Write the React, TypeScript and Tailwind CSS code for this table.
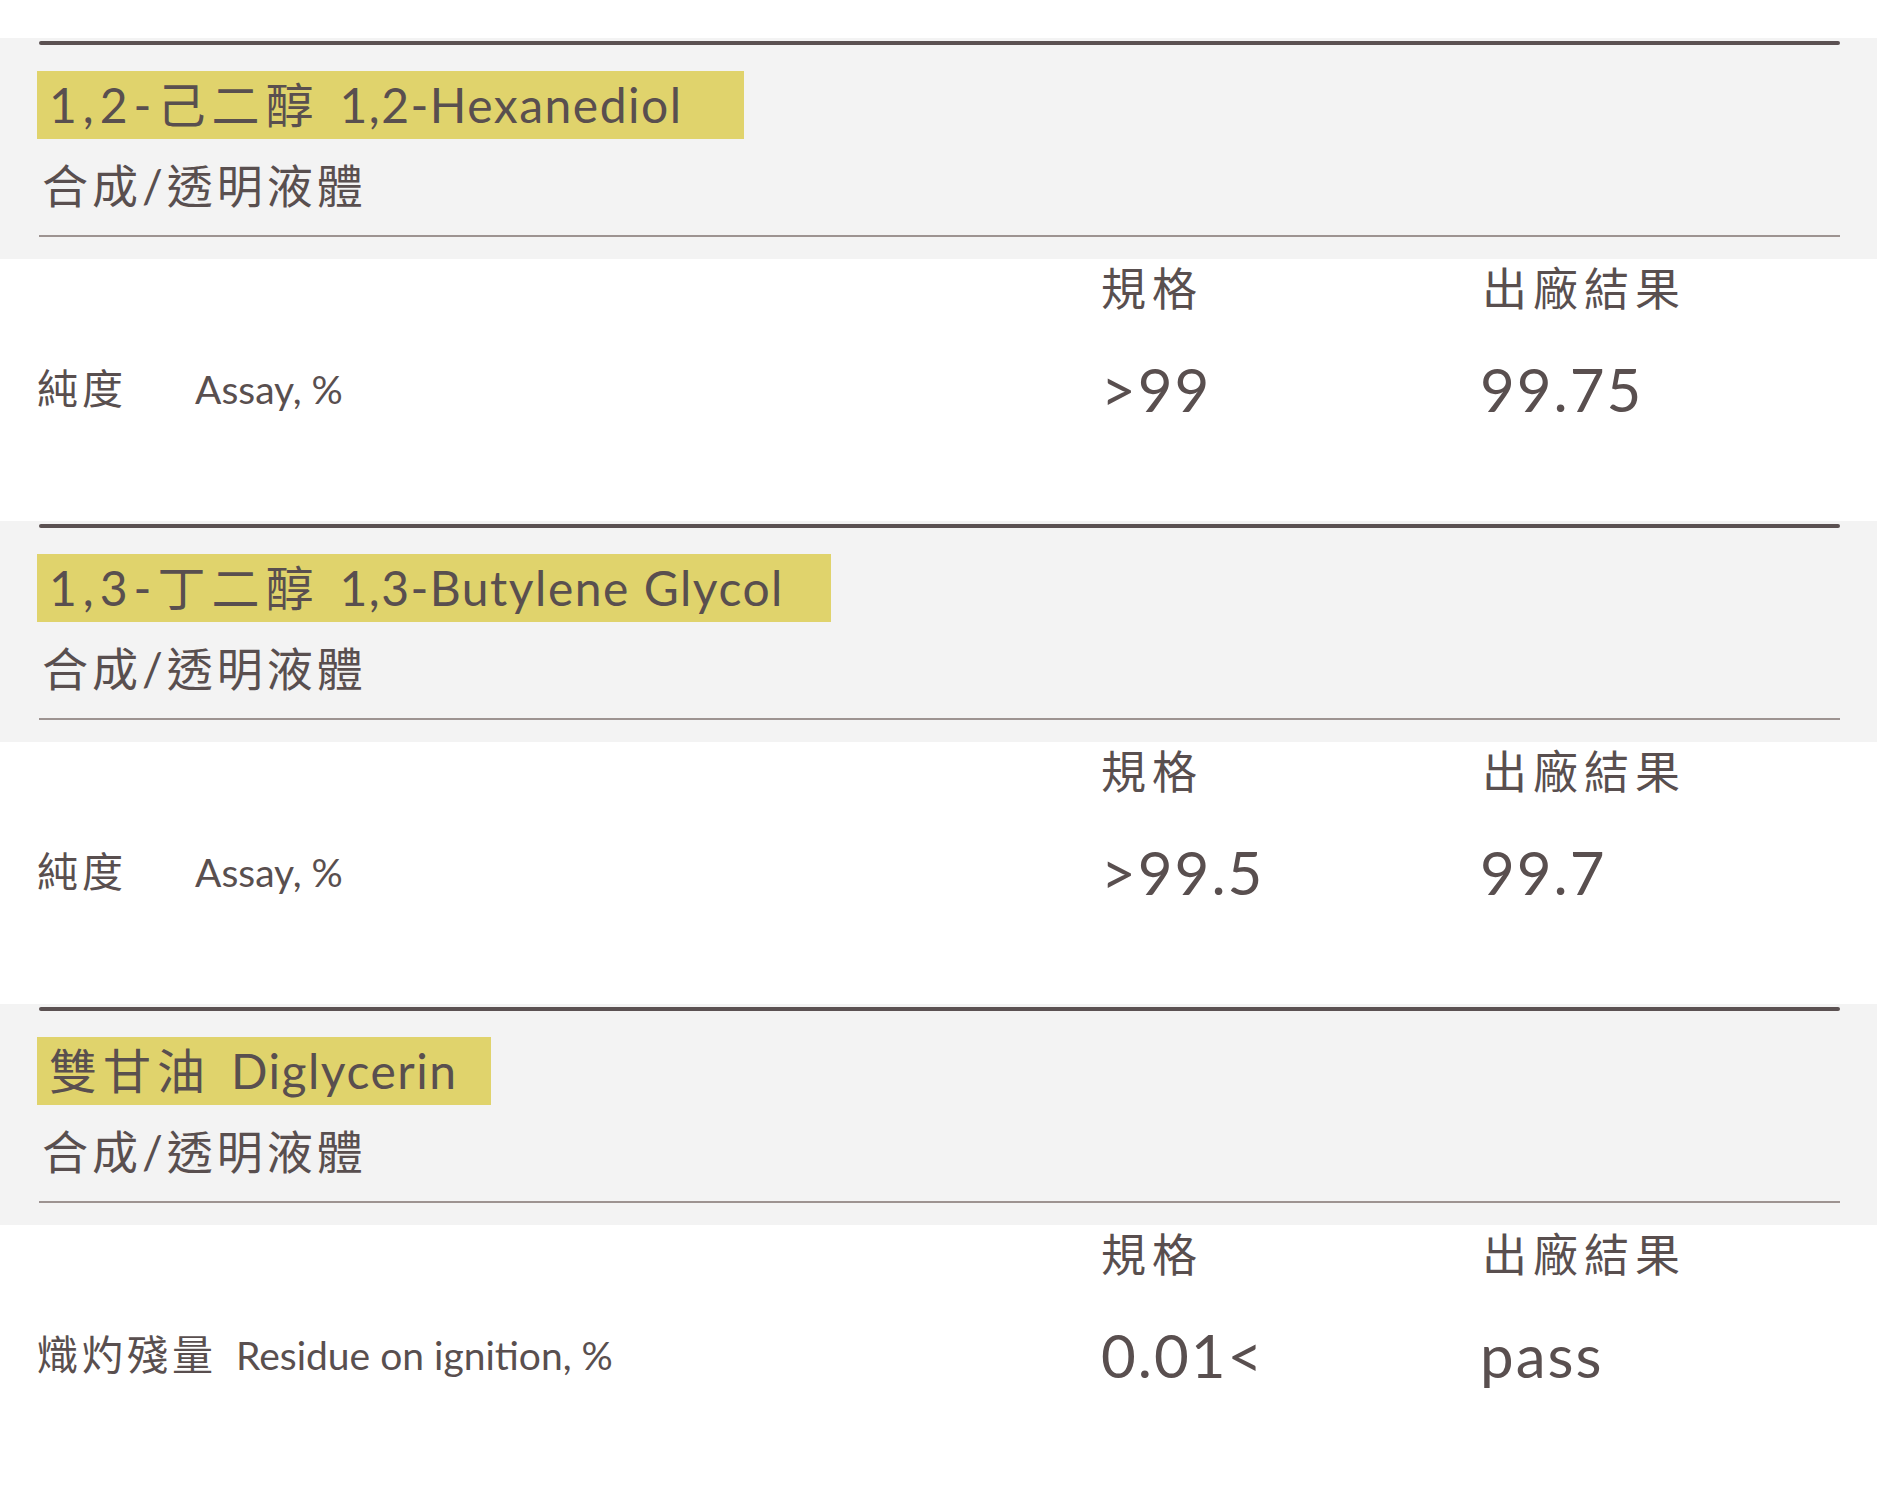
import React from "react";

type Item = {
  zhTitle: string;
  enTitle: string;
  boxW: string;
  zh: string;
  en: string;
  spec: string;
  result: string;
};

const items: Item[] = [
  {
    zhTitle: "1,2-己二醇",
    enTitle: "1,2-Hexanediol",
    boxW: "w-[707px]",
    zh: "純度",
    en: "Assay, %",
    spec: ">99",
    result: "99.75",
  },
  {
    zhTitle: "1,3-丁二醇",
    enTitle: "1,3-Butylene Glycol",
    boxW: "w-[794px]",
    zh: "純度",
    en: "Assay, %",
    spec: ">99.5",
    result: "99.7",
  },
  {
    zhTitle: "雙甘油",
    enTitle: "Diglycerin",
    boxW: "w-[454px]",
    zh: "熾灼殘量",
    en: "Residue on ignition, %",
    spec: "0.01<",
    result: "pass",
  },
];

const FONT = "font-['Lato','Noto_Sans_CJK_TC',sans-serif]";

function Section({ item }: { item: Item }) {
  return (
    <section>
      <div className="bg-[#f3f3f3] pt-[3px] pb-[22px]">
        <div className="ml-[39px] mr-[37px] h-[4px] rounded-full bg-[#5b5152]" />
        <div
          className={`mt-[26px] ml-[37px] h-[68px] ${item.boxW} bg-[#e0d36c] pl-[12px] text-[48px] leading-[68px] whitespace-nowrap`}
        >
          <span className="tracking-[6px]">{item.zhTitle}</span>
          <span className="ml-[20px] tracking-[1.5px]">{item.enTitle}</span>
        </div>
        <div className="mt-[24px] ml-[42px] h-[46px] text-[46px] leading-[46px] tracking-[4px] whitespace-nowrap">
          合成/透明液體
        </div>
        <div className="mt-[26px] ml-[39px] mr-[37px] h-[2px] bg-[#9d9391]" />
      </div>
      <div className="h-[262px] pl-[37px] pt-[8px]">
        <div className="flex h-[44px] items-center text-[45px] leading-[44px] tracking-[6px]">
          <div className="w-[1064px]" />
          <div className="w-[381px]">規格</div>
          <div className="flex-1">出廠結果</div>
        </div>
        <div className="mt-[48px] flex h-[60px] items-center">
          <div className="flex w-[1064px] items-center gap-[19px]">
            <span className="min-w-[139px] text-[41px] leading-[40px] tracking-[4px]">
              {item.zh}
            </span>
            <span className="text-[39px] leading-[40px]">{item.en}</span>
          </div>
          <div className="w-[379px] text-[60px] leading-[60px] tracking-[2px]">
            {item.spec}
          </div>
          <div className="flex-1 text-[60px] leading-[60px] tracking-[2px]">
            {item.result}
          </div>
        </div>
      </div>
    </section>
  );
}

export default function App() {
  return (
    <div className={`min-h-[1489px] w-[1877px] bg-white pt-[38px] text-[#594f4f] ${FONT}`}>
      {items.map((it) => (
        <Section key={it.enTitle} item={it} />
      ))}
    </div>
  );
}
